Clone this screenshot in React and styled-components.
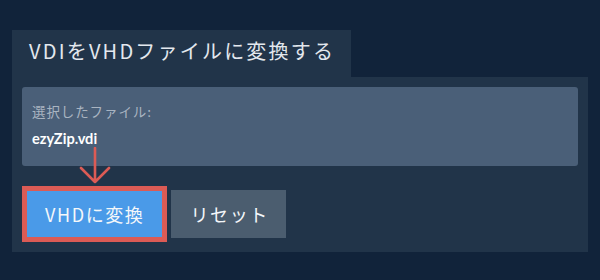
import React from 'react'
import styled, { createGlobalStyle } from 'styled-components'

const GlobalStyle = createGlobalStyle`
  html, body {
    margin: 0;
    padding: 0;
    background: #11233a;
  }
  body {
    font-family: "Noto Sans CJK JP", "Noto Sans", sans-serif;
  }
`

const Page = styled.div`
  width: 600px;
  height: 280px;
  padding: 30px 12px 0 12px;
  box-sizing: border-box;
  background: #11233a;
`

const Tab = styled.div`
  display: inline-block;
  height: 47px;
  padding: 0 16px 0 17px;
  background: #213449;
  color: #e3e8ee;
  font-size: 20px;
  letter-spacing: 2.2px;
  line-height: 42px;
  font-weight: 400;
`

const Panel = styled.div`
  background: #213449;
  padding: 10px 10px 10px 10px;
  height: 175px;
  box-sizing: border-box;
`

const FileBox = styled.div`
  height: 79px;
  background: #4a5f78;
  border-radius: 3px;
  padding: 15px 10px 0 10px;
  box-sizing: border-box;
`

const FileLabel = styled.div`
  color: #a9b4c1;
  font-size: 13.5px;
  letter-spacing: 0.9px;
  line-height: 18px;
`

const FileName = styled.div`
  margin-top: 10px;
  color: #ffffff;
  font-family: "Lato", "Noto Sans CJK JP", sans-serif;
  font-weight: 700;
  font-size: 14.6px;
  line-height: 18px;
`

const ArrowWrap = styled.div`
  position: relative;
  height: 20px;
`

const Arrow = styled.svg`
  position: absolute;
  left: 57px;
  top: -19px;
`

const Actions = styled.div`
  display: flex;
  align-items: center;
  gap: 4px;
`

const Button = styled.button`
  font-family: "Noto Sans CJK JP", "Noto Sans", sans-serif;
  font-size: 18px;
  letter-spacing: 1.6px;
  color: #f4f7fa;
  border: none;
  margin: 0;
  cursor: pointer;
  box-sizing: border-box;
  height: ${p => (p.$highlight ? '56px' : '48px')};
  padding: 0 ${p => (p.$highlight ? '18px' : '17px')} 0 ${p => (p.$highlight ? '18px' : '19px')};
  background: ${p => (p.$primary ? '#4a9ae8' : '#4b5d6f')};
  border: ${p => (p.$highlight ? '5px solid #dc5b55' : 'none')};
`

export default function App() {
  return (
    <Page>
      <GlobalStyle />
      <Tab>VDIをVHDファイルに変換する</Tab>
      <Panel>
        <FileBox>
          <FileLabel>選択したファイル:</FileLabel>
          <FileName>ezyZip.vdi</FileName>
        </FileBox>
        <ArrowWrap>
          <Arrow width="32" height="40" viewBox="0 0 32 40">
            <path d="M16 1 V35 M2 21 L16 35 L30 21" fill="none" stroke="#dc5b55" strokeWidth="2.6" strokeLinecap="round" strokeLinejoin="round" />
          </Arrow>
        </ArrowWrap>
        <Actions>
          <Button $primary $highlight>VHDに変換</Button>
          <Button>リセット</Button>
        </Actions>
      </Panel>
    </Page>
  )
}
